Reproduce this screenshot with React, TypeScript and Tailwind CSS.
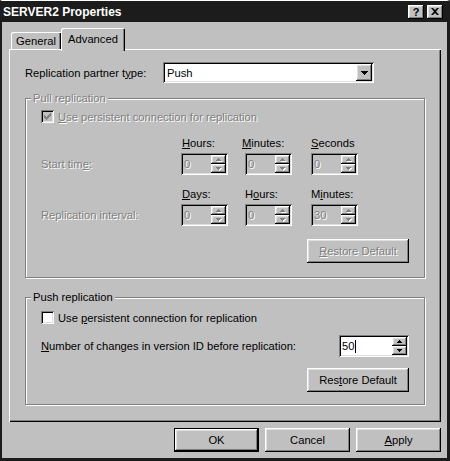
import React from 'react';

const raised = 'shadow-[inset_-1px_-1px_#000,inset_1px_1px_#fff,inset_-2px_-2px_#808080,inset_2px_2px_#dfdfdf]';
const sunken = 'shadow-[inset_1px_1px_#808080,inset_-1px_-1px_#fff,inset_2px_2px_#000,inset_-2px_-2px_#dfdfdf]';
const dim = 'text-[#808080] [text-shadow:1px_1px_0_#fff]';
const etched = 'border border-[#808080] shadow-[inset_1px_1px_#fff,1px_1px_#fff]';

function Tri({ up, disabled }: { up?: boolean; disabled?: boolean }) {
  const d = up ? 'M2 0h1v1h1v1h1v1H0V2h1V1h1z' : 'M0 0h5v1H4v1H3v1H2V2H1V1H0z';
  return (
    <svg width="6" height="4" viewBox="0 0 6 4">
      {disabled && <path d={d} fill="#fff" transform="translate(1 1)" />}
      <path d={d} fill={disabled ? '#808080' : '#000'} />
    </svg>
  );
}

function Spin({ value, disabled, w, cursor }: { value: string; disabled?: boolean; w: string; cursor?: boolean }) {
  return (
    <div className={`flex h-[22px] p-[2px] ${w} ${sunken} ${disabled ? 'bg-[#c0c0c0]' : 'bg-white'}`}>
      <div className={`flex flex-1 items-center pl-[1px] leading-[14px] ${disabled ? dim : ''}`}>
        {value}
        {cursor && <span className="ml-[1px] inline-block h-[13px] w-px bg-black" />}
      </div>
      <div className="flex w-[15px] flex-col">
        <div className={`flex h-[9px] items-center justify-center bg-[#c0c0c0] ${raised}`}>
          <Tri up disabled={disabled} />
        </div>
        <div className={`flex h-[9px] items-center justify-center bg-[#c0c0c0] ${raised}`}>
          <Tri disabled={disabled} />
        </div>
      </div>
    </div>
  );
}

function Check({ checked, disabled }: { checked?: boolean; disabled?: boolean }) {
  return (
    <div className={`flex h-[13px] w-[13px] shrink-0 items-center justify-center ${sunken} ${disabled ? 'bg-[#c0c0c0]' : 'bg-white'}`}>
      {checked && (
        <svg width="7" height="7" viewBox="0 0 7 7">
          <path d="M6 0h1v3H6v1H5v1H4v1H3v1H2V6H1V5H0V2h1v1h1v1h1V3h1V2h1V1h1z" fill={disabled ? '#808080' : '#000'} />
        </svg>
      )}
    </div>
  );
}

function Btn({ children, disabled, def, w }: { children: React.ReactNode; disabled?: boolean; def?: boolean; w: string }) {
  return (
    <div className={`flex h-[24px] items-center justify-center bg-[#c0c0c0] ${w} ${def ? 'border border-black' : ''}`}>
      <div className={`flex h-full w-full items-center justify-center ${raised} ${disabled ? dim : ''}`}>{children}</div>
    </div>
  );
}

export default function App() {
  return (
    <div className="flex h-[461px] w-[450px] flex-col border-t border-r-[3px] border-b-[3px] border-l-2 border-t-white border-r-[#1c1c1c] border-b-[#1c1c1c] border-l-[#1c1c1c] bg-[#c0c0c0] font-['Liberation_Sans',Arial,sans-serif] text-[11.2px] leading-[14px] text-black">
      {/* title bar */}
      <div className="flex h-[21px] items-center justify-between bg-[#1c1c1c] pr-[4px] pl-[1px]">
        <span className="text-[12px] font-bold text-white">SERVER2 Properties</span>
        <div className="flex gap-[3px]">
          <div className={`flex h-[14px] w-[16px] items-center justify-center bg-[#c0c0c0] text-[11px] font-bold ${raised}`}>?</div>
          <div className={`flex h-[14px] w-[16px] items-center justify-center bg-[#c0c0c0] ${raised}`}>
            <svg width="8" height="7" viewBox="0 0 8 7">
              <path d="M0 0h2l2 2 2-2h2L5 3.5 8 7H6L4 5 2 7H0l3-3.5z" fill="#000" />
            </svg>
          </div>
        </div>
      </div>

      {/* tabs */}
      <div className="mt-[6px] flex h-[21px] items-end pl-[9px]">
        <div className="flex h-[17px] w-[50px] items-center justify-center rounded-tl-[2px] shadow-[inset_1px_1px_#fff,inset_-1px_0_#000,inset_-2px_0_#808080]">
          General
        </div>
        <div className="relative z-10 -mb-[2px] flex h-[23px] w-[64px] items-start justify-center rounded-t-[2px] bg-[#c0c0c0] pt-[4px] shadow-[inset_1px_1px_#fff,inset_-1px_0_#000,inset_-2px_0_#808080]">
          Advanced
        </div>
      </div>

      {/* panel */}
      <div className="ml-[7px] flex h-[373px] w-[432px] flex-col px-[16px] pt-[13px] shadow-[inset_1px_1px_#fff,inset_-1px_-1px_#000,inset_-2px_-2px_#808080]">
        <div className="flex h-[21px] items-center">
          <span className="w-[138px]">
            Replication partner t<u>y</u>pe:
          </span>
          <div className={`flex h-[21px] w-[211px] bg-white p-[2px] ${sunken}`}>
            <div className="flex flex-1 items-center pl-[2px]">Push</div>
            <div className={`flex w-[16px] items-center justify-center bg-[#c0c0c0] ${raised}`}>
              <svg width="7" height="4" viewBox="0 0 7 4">
                <path d="M0 0h7v1H6v1H5v1H4v1H3V3H2V2H1V1H0z" fill="#000" />
              </svg>
            </div>
          </div>
        </div>

        {/* pull replication */}
        <div className={`mt-[15px] flex h-[180px] flex-col px-[15px] ${etched}`}>
          <span className={`-mt-[8px] -ml-[10px] self-start bg-[#c0c0c0] px-[2px] ${dim}`}>Pull replication</span>
          <div className="mt-[5px] flex h-[13px] items-center">
            <Check checked disabled />
            <span className={`ml-[4px] ${dim}`}>
              <u>U</u>se persistent connection for replication
            </span>
          </div>

          <div className="mt-[13px] flex">
            <div className={`flex h-[22px] w-[140px] items-center self-end ${dim}`}>
              Start tim<u>e</u>:
            </div>
            <div className="flex w-[64px] flex-col">
              <span className="pl-[1px]"><u>H</u>ours:</span>
              <div className="mt-[3px]"><Spin value="0" disabled w="w-[47px]" /></div>
            </div>
            <div className="flex w-[66px] flex-col">
              <span className="-ml-[3px]"><u>M</u>inutes:</span>
              <div className="mt-[3px]"><Spin value="0" disabled w="w-[47px]" /></div>
            </div>
            <div className="flex flex-col">
              <span><u>S</u>econds</span>
              <div className="mt-[3px]"><Spin value="0" disabled w="w-[47px]" /></div>
            </div>
          </div>

          <div className="mt-[12px] flex">
            <div className={`flex h-[22px] w-[140px] items-center self-end ${dim}`}>
              Replication interval:
            </div>
            <div className="flex w-[64px] flex-col">
              <span className="pl-[1px]"><u>D</u>ays:</span>
              <div className="mt-[3px]"><Spin value="0" disabled w="w-[47px]" /></div>
            </div>
            <div className="flex w-[66px] flex-col">
              <span>H<u>o</u>urs:</span>
              <div className="mt-[3px]"><Spin value="0" disabled w="w-[47px]" /></div>
            </div>
            <div className="flex flex-col">
              <span>M<u>i</u>nutes:</span>
              <div className="mt-[3px]"><Spin value="30" disabled w="w-[47px]" /></div>
            </div>
          </div>

          <div className="mt-[13px] self-end">
            <Btn disabled w="w-[102px]">
              <span><u>R</u>estore Default</span>
            </Btn>
          </div>
        </div>

        {/* push replication */}
        <div className={`mt-[19px] flex h-[108px] flex-col px-[15px] ${etched}`}>
          <span className="-mt-[8px] -ml-[10px] self-start bg-[#c0c0c0] px-[2px]">Push replication</span>
          <div className="mt-[7px] flex h-[13px] items-center">
            <Check />
            <span className="ml-[4px]">
              Use <u>p</u>ersistent connection for replication
            </span>
          </div>
          <div className="mt-[11px] flex h-[22px] items-center justify-between">
            <span>
              <u>N</u>umber of changes in version ID before replication:
            </span>
            <Spin value="50" cursor w="w-[70px]" />
          </div>
          <div className="mt-[11px] self-end">
            <Btn w="w-[102px]">
              <span>Res<u>t</u>ore Default</span>
            </Btn>
          </div>
        </div>
      </div>

      {/* dialog buttons */}
      <div className="mt-[6px] flex justify-end gap-[6px] pr-[6px]">
        <Btn def w="w-[85px]">OK</Btn>
        <Btn w="w-[85px]">Cancel</Btn>
        <Btn w="w-[85px]">
          <span><u>A</u>pply</span>
        </Btn>
      </div>
    </div>
  );
}
